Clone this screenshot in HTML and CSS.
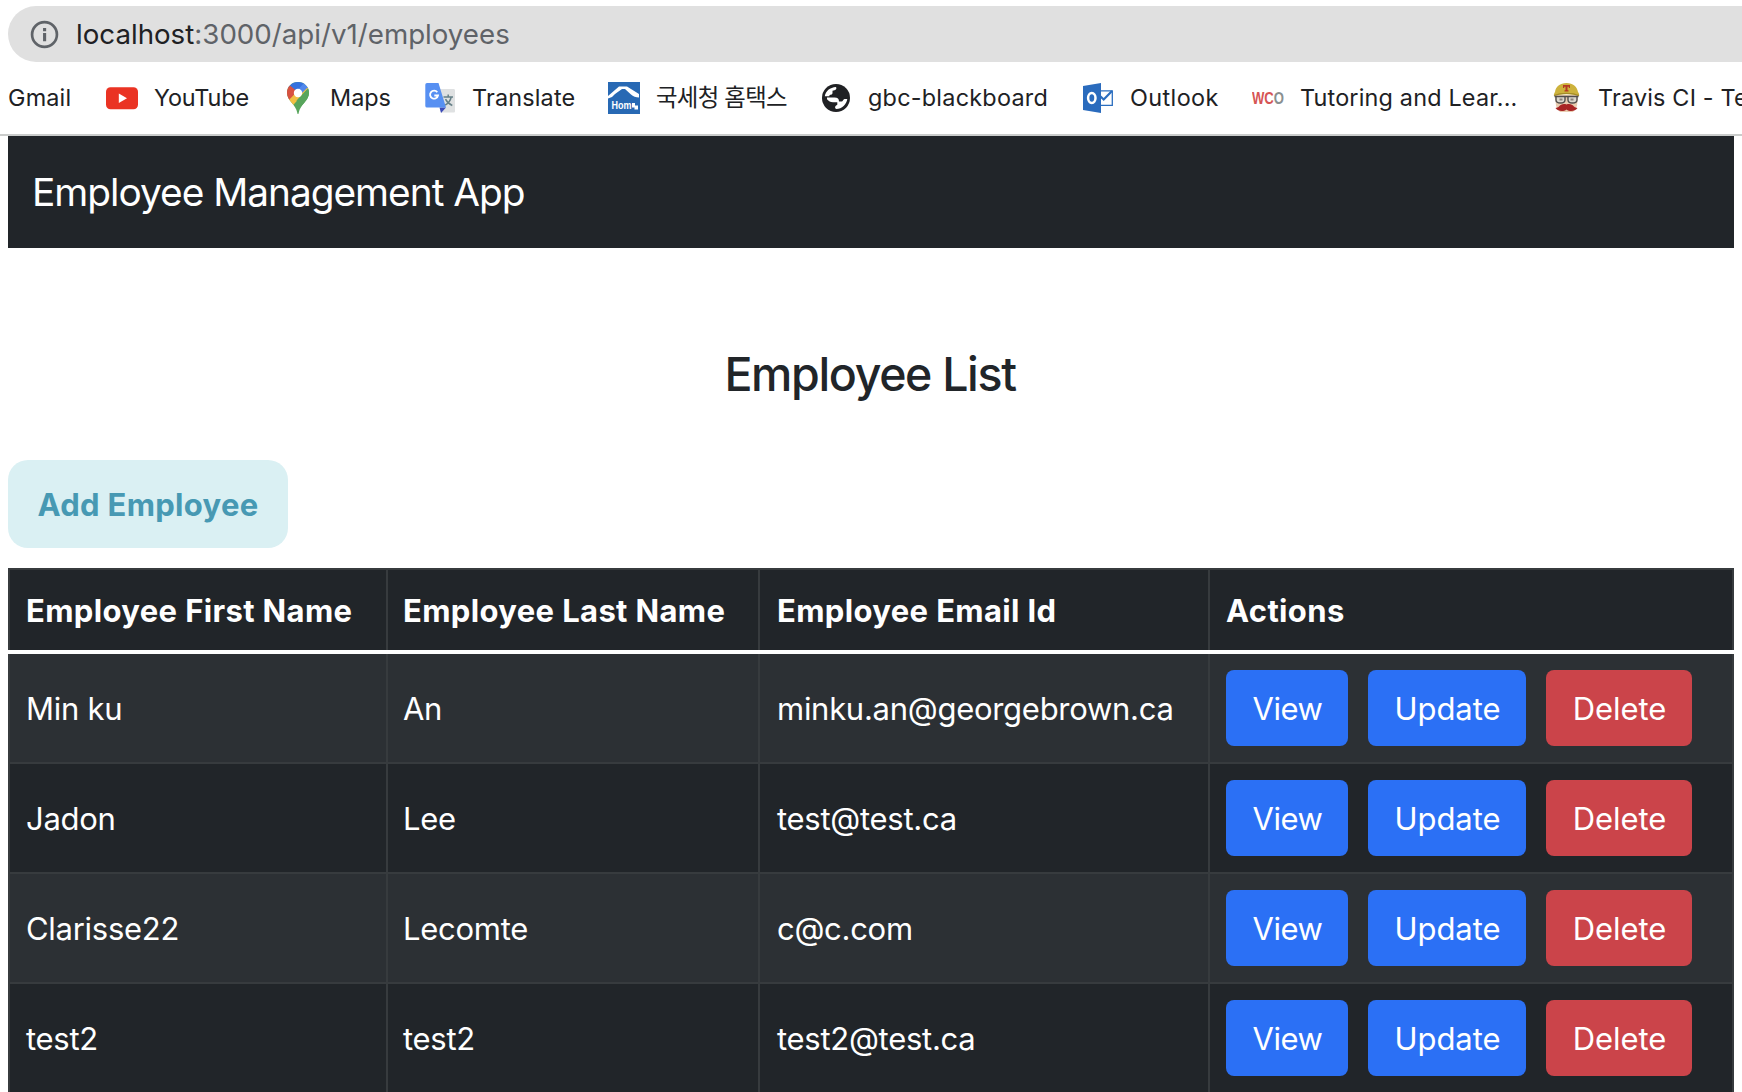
FILE: index.html
```html
<!DOCTYPE html>
<html lang="en">
<head>
<meta charset="utf-8">
<title>Employee Management App</title>
<link rel="stylesheet" href="styles.css">
</head>
<body>
<header class="browser">
  <div class="address">
    <svg class="info" viewBox="0 0 28 28"><circle cx="14" cy="14" r="12" fill="none" stroke="#5f6368" stroke-width="2.6"/><path d="M12.6 12.6h3v7.8h-3zM12.6 7.8h3v3h-3z" fill="#5f6368"/></svg>
    <span class="url"><span class="host">localhost</span>:3000/api/v1/employees</span>
  </div>
  <nav class="bookmarks">
    <a class="bookmark gmail"><span>Gmail</span></a>
    <a class="bookmark youtube"><svg class="icon" viewBox="0 0 32 32"><rect y="5.2" width="32" height="22" rx="4.5" fill="#ea3323"/><path d="M12.8 11.5v9.4l8.2-4.7z" fill="#fff"/></svg><span>YouTube</span></a>
    <a class="bookmark maps"><svg class="icon" viewBox="0 0 32 32">
      <defs><clipPath id="pin"><path d="M16 0C9.8 0 5 4.8 5 10.800c0 4.200 2 6.700 4.500 9.700 3 3.500 4.900 6.200 5.700 10 .2 1 .4 1.500.8 1.500s.6-.5.8-1.500c.8-3.800 2.700-6.500 5.700-10C25 17.500 27 15 27 10.800 27 4.800 22.200 0 16 0z"/></clipPath></defs>
      <g clip-path="url(#pin)"><path d="M0 0h32v32H0z" fill="#58a55c"/><path d="M5 0h18L13 13 6 5z" fill="#3571de"/><path d="M23 0l4 6-11 9-3-4z" fill="#5087ec"/><path d="M27 5.500L8.500 26 4 20 16 8z" fill="#f1bf42"/><path d="M27 5.500L14.500 18.500 19 24 30 15z" fill="#58a55c"/><path d="M21.500 2l4 3.500L18 13l-4-3z" fill="#5087ec"/><path d="M4 4l4-.5 7 6L6 19 3 12z" fill="#d85140"/></g><circle cx="16" cy="11" r="4.200" fill="#fff"/></svg><span>Maps</span></a>
    <a class="bookmark translate"><svg class="icon" viewBox="0 0 32 32">
      <path d="M14 7h15.500c1 0 1.500.6 1.500 1.500V29c0 1-.5 1.500-1.500 1.500H17z" fill="#dfe1e2"/><path d="M15.500 25.500h6.500l-5 5.500z" fill="#3c4bb8"/><path d="M3 1h11.500l7.500 24.500H3A1.700 1.700 0 0 1 1.300 24V2.700A1.700 1.700 0 0 1 3 1z" fill="#5790f2"/><path d="M13.300 10.300A4 4 0 1 0 14 13.500h-3.700" fill="none" stroke="#fff" stroke-width="1.800"/><path d="M19.500 15h9.500M24.200 12.500V15M27.200 15c-.8 3.700-3 6.400-6 8.200M21.500 17.200c1.500 3 3.700 5 6.800 6.300" fill="none" stroke="#668088" stroke-width="1.500"/></svg><span>Translate</span></a>
    <a class="bookmark hometax"><svg class="icon" viewBox="0 0 32 32"><path d="M0 0h32v32H0z" fill="#2869b4"/><path d="M0 14L11 4.500h8L31 12v3.500c-3 0-6-1-8-3l-6-5.500h-3L7 12l-3 3-4 1.500z" fill="#fff"/><text class="home-mark" x="3.500" y="26.500" textLength="20" lengthAdjust="spacingAndGlyphs">Hom</text><path d="M24 21h3v2.500h3v4h-3.500v-2H24z" fill="#fff"/></svg><span>국세청 홈택스</span></a>
    <a class="bookmark blackboard"><svg class="icon" viewBox="0 0 32 32"><circle cx="16" cy="16" r="14" fill="#202124"/><path d="M4.800 14.300C5.500 9 10 5.500 16 5c.8 1.500.3 3-1.500 3.300l-2 .4v2.200c0 1.200-.9 1.700-2.200 1.800-.7.100-1 .5-1 1.600z" fill="#fff"/><path d="M7 15.500h7.500c3.300 0 4.500 1.300 4.500 4h2.500c1.500 0 1.700-2.300 3-2.500h2.800c-.8 5.500-5.300 9.800-11 10-1.300-.5-1.800-2.200-.5-3.300l1.500-1v-2.400H13c-2.700 0-4.200-1.300-6-3z" fill="#fff"/></svg><span>gbc-blackboard</span></a>
    <a class="bookmark outlook"><svg class="icon" viewBox="0 0 32 32"><path d="M16 8.800h14.300v14.600H16z" fill="#fff" stroke="#2b6ebf" stroke-width="1.300"/><path d="M17.500 13.500l4.200 4L30 9" fill="none" stroke="#2b6ebf" stroke-width="2.200"/><path d="M1 4l18-3v30L1 28z" fill="#2a6bbd"/><ellipse cx="9.800" cy="16" rx="3.700" ry="4.900" fill="none" stroke="#fff" stroke-width="2.500"/></svg><span>Outlook</span></a>
    <a class="bookmark tutoring"><svg class="icon" viewBox="0 0 32 32"><text class="wco" x="0" y="21.500" textLength="32" lengthAdjust="spacingAndGlyphs">WC<tspan class="wco-o">O</tspan></text></svg><span>Tutoring and Lear...</span></a>
    <a class="bookmark travis"><svg class="icon" viewBox="0 0 32 32"><path d="M5 13h23l-1 11-4 6H10l-4-6z" fill="#e9cdb1"/><path d="M4 14c-.5-2 .5-3 1-4 .7-5.500 5-9 11.500-9S27 4.500 28 10c.7 1 1.500 2 1 4-7-2.500-18-2.500-25 0z" fill="#cdb23c"/><path d="M4 13.500c7-2.800 18-2.800 25 0" fill="none" stroke="#a48c28" stroke-width="1.200"/><path d="M13 3h7v3h-1.200V4.800h-1.300v3.400h1v1.300h-4V8.200h1V4.800h-1.300V6H13z" fill="#b33a22"/><path d="M4.500 14.500h24M6 14.500h9v3.500q0 3-4.500 3T6 18zM18 14.500h9V18q0 3-4.500 3T18 18z" fill="#dcd8cf" stroke="#514d4c" stroke-width="1.400"/><path d="M9.500 16.500h3v2h-3zM20.500 16.500h3v2h-3z" fill="#8b837b"/><path d="M16.500 22.500c3-1.200 6 0 7.500 2 1.200 1 2.500 1.300 3.500 1.500-2 3.500-8 4-11 1.500-3 2.500-9 2-11-1.500 1-.2 2.300-.5 3.500-1.500 1.500-2 4.500-3.200 7.500-2z" fill="#a82424"/></svg><span>Travis CI - Test</span></a>
  </nav>
</header>
<main class="page">
  <div class="navbar"><span class="brand">Employee Management App</span></div>
  <h2 class="heading">Employee List</h2>
  <button class="add">Add Employee</button>
  <table class="employees">
    <colgroup><col class="col-first"><col class="col-last"><col class="col-email"><col class="col-actions"></colgroup>
    <thead><tr><th>Employee First Name</th><th>Employee Last Name</th><th>Employee Email Id</th><th>Actions</th></tr></thead>
    <tbody>
      <tr><td>Min ku</td><td>An</td><td>minku.an@georgebrown.ca</td><td><div class="actions"><button class="btn view">View</button><button class="btn update">Update</button><button class="btn delete">Delete</button></div></td></tr>
      <tr><td>Jadon</td><td>Lee</td><td>test@test.ca</td><td><div class="actions"><button class="btn view">View</button><button class="btn update">Update</button><button class="btn delete">Delete</button></div></td></tr>
      <tr><td>Clarisse22</td><td>Lecomte</td><td>c@c.com</td><td><div class="actions"><button class="btn view">View</button><button class="btn update">Update</button><button class="btn delete">Delete</button></div></td></tr>
      <tr><td>test2</td><td>test2</td><td>test2@test.ca</td><td><div class="actions"><button class="btn view">View</button><button class="btn update">Update</button><button class="btn delete">Delete</button></div></td></tr>
    </tbody>
  </table>
</main>
</body>
</html>
```
FILE: styles.css
```css
* { box-sizing: border-box; }
body {
  margin: 0;
  height: 1092px;
  overflow: hidden;
  background: #fff;
  color: #212529;
  font-family: Inter, "Noto Sans CJK KR", sans-serif;
  font-size: 31px;
}
button { font: inherit; border: 0; margin: 0; }

.browser {
  height: 136px;
  padding-top: 6px;
  border-bottom: 2px solid #cacccb;
}
.address {
  display: flex;
  align-items: center;
  gap: 17px;
  height: 56px;
  margin-left: 8px;
  padding-left: 22px;
  border-radius: 28px 0 0 28px;
  background: #e0e0e0;
}
.info { width: 29px; height: 29px; }
.url { font-size: 27.700px; line-height: 56px; color: #5f6368; white-space: nowrap; }
.host { color: #202124; }
.bookmarks {
  display: grid;
  grid-template-columns: 98px 176px 142px 184px 212px 262px 170px 298px 192px;
  height: 72px;
  padding-left: 8px;
  color: #202124;
  font-size: 23.400px;
  letter-spacing: .18px;
}
.bookmark { display: flex; align-items: center; gap: 16px; white-space: nowrap; }
.bookmark span { padding-bottom: 2px; }
.hometax span { padding-bottom: 4px; letter-spacing: -.7px; }
.youtube span { letter-spacing: -.15px; }
.maps span { letter-spacing: 0; }
.blackboard span { letter-spacing: .25px; }
.outlook span { letter-spacing: .4px; }
.travis { overflow: hidden; }
.icon { flex: none; width: 32px; height: 32px; }
.home-mark { font: bold 11.500px "Liberation Sans", sans-serif; letter-spacing: 0; fill: #fff; }
.wco { font: bold 16px "Liberation Sans", sans-serif; letter-spacing: 0; fill: #d65555; }
.wco-o { fill: #899090; }

.page { padding: 0 8px; }
.navbar {
  height: 112px;
  padding-left: 24px;
  background: #212529;
  color: #fff;
  font-size: 38.800px;
  letter-spacing: -1px;
  line-height: 112px;
}
.heading {
  height: 56px;
  margin: 98px 0 58px;
  padding-right: 2px;
  font-size: 46.500px;
  font-weight: 500;
  letter-spacing: -1.350px;
  line-height: 56px;
  text-align: center;
}
.add {
  display: block;
  width: 280px;
  height: 88px;
  margin-bottom: 20px;
  padding: 0;
  border-radius: 20px;
  background: #daf0f3;
  color: #4799b3;
  font-weight: 700;
  letter-spacing: .300px;
  white-space: nowrap;
}

.employees {
  width: 1726px;
  table-layout: fixed;
  border-collapse: collapse;
  color: #fff;
  background: #212529;
}
.col-first { width: 378px; }
.col-last { width: 372px; }
.col-email { width: 450px; }
.col-actions { width: 524px; }
.employees th, .employees td {
  padding: 2px 15px 0 16px;
  border: 2px solid #373b3e;
  text-align: left;
  vertical-align: middle;
  white-space: nowrap;
  line-height: 48px;
}
.employees th {
  height: 83px;
  font-weight: 700;
  letter-spacing: .360px;
  border-bottom: 4px solid #fff;
}
.employees td { height: 110px; letter-spacing: -.280px; }
.employees th:nth-child(2), .employees td:nth-child(2) { padding-left: 15px; }
.employees th:nth-child(3), .employees td:nth-child(3) { padding-left: 17px; }
.employees td:last-child { padding-top: 0; }
.employees tbody tr:first-child td { height: 111px; border-top: 4px solid #fff; }
.employees tbody tr:nth-child(odd) { background: #2c3034; }
.actions { display: flex; gap: 20px; }
.btn {
  height: 76px;
  padding: 2px 0 0 1px;
  border-radius: 8px;
  background: #2b70f5;
  color: #fff;
  letter-spacing: -.100px;
}
.view { width: 122px; letter-spacing: -.400px; }
.update { width: 158px; }
.delete { width: 146px; background: #cb444a; }
```
